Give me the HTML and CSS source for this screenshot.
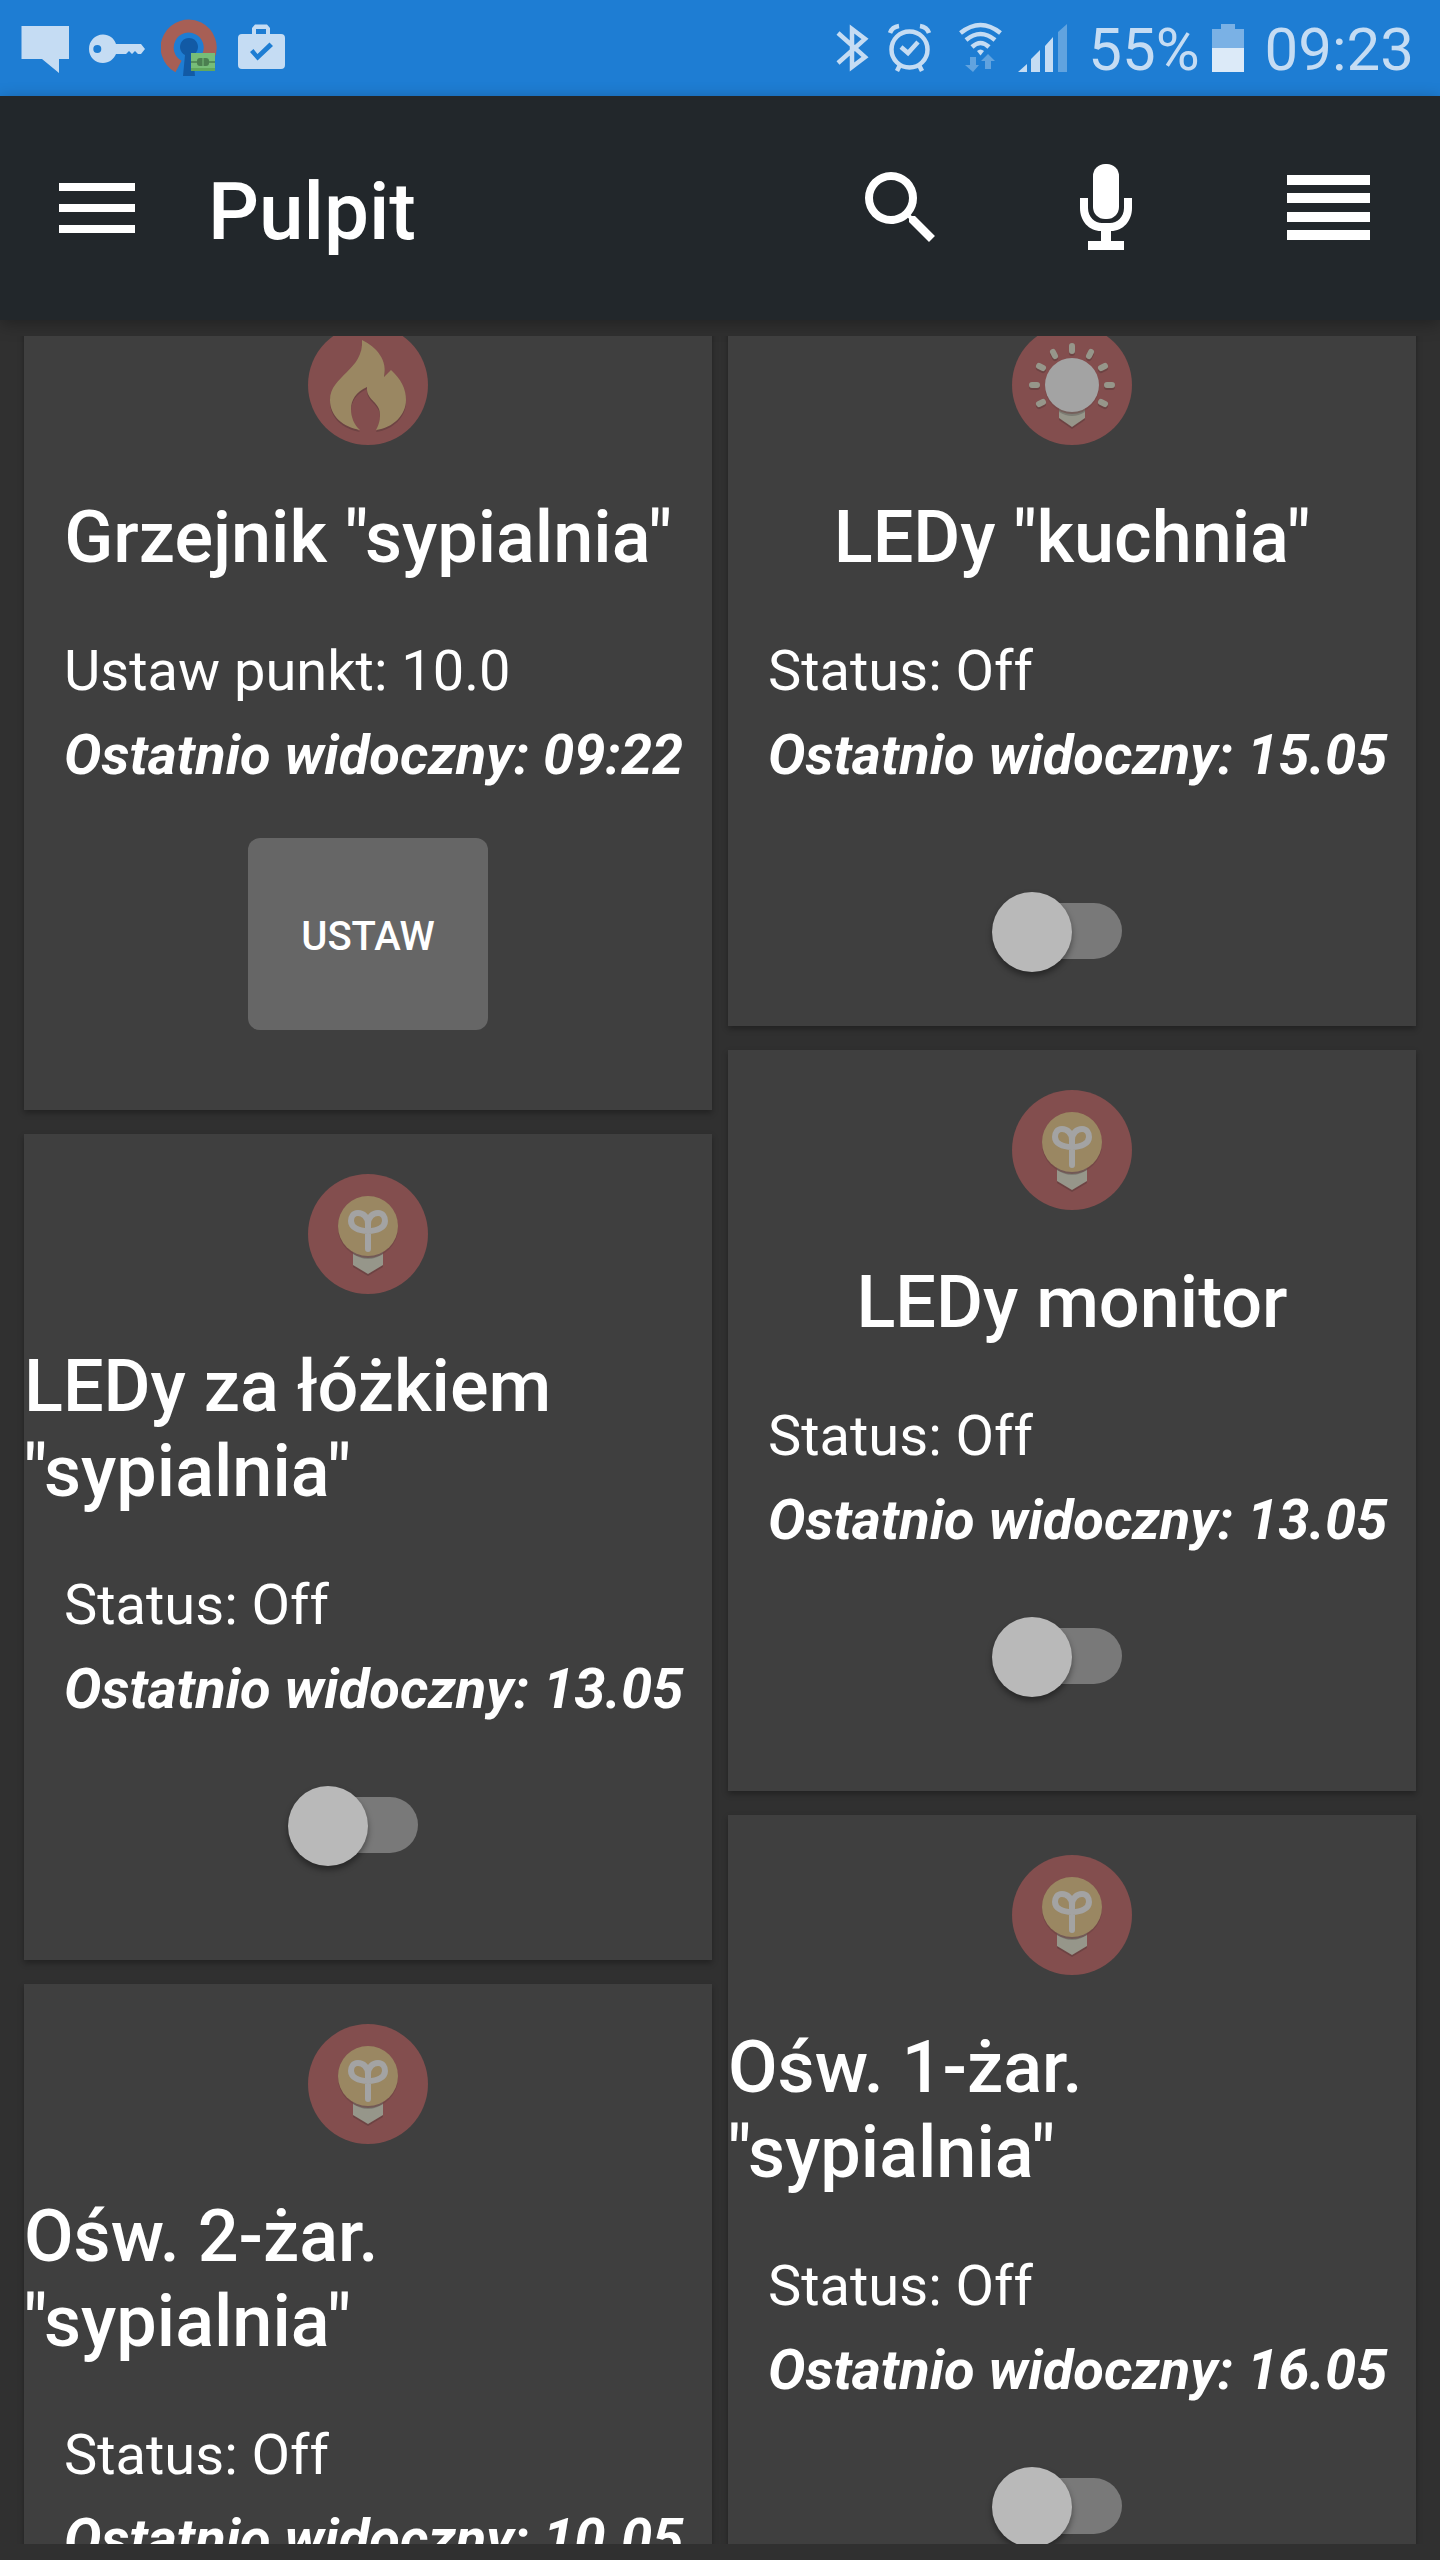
FILE: index.html
```html
<!DOCTYPE html>
<html lang="pl">
    <head>
        <title>Pulpit</title>
        <meta charset="UTF-8">
        <meta name="viewport" content="width=device-width, initial-scale=1">
        <link rel="stylesheet" href="styles.css">
    </head>
    <body>

        <!-- shared card icons -->
        <svg class="defs" aria-hidden="true">
            <symbol id="bulb" viewBox="0 0 120 120">
                <circle cx="60" cy="60" r="60" fill="#834e4e"/>
                <path d="M45 76V93L60 102L75 93V76Z" fill="#6d4343"/>
                <path d="M45 74V91L60 100L75 91V74Z" fill="#96968a"/>
                <path d="M45 76V80Q60 90 75 80V76Z" fill="#7c7c73"/>
                <circle cx="60" cy="54" r="30" fill="#6d4343" opacity=".6"/>
                <circle cx="60" cy="52" r="30" fill="#9a8762"/>
                <path d="M60 75V50C60 43 55 39 50 39C45 39 43 43 43 47C43 53 50 57 60 57C70 57 77 53 77 47C77 43 75 39 70 39C65 39 60 43 60 50" fill="none" stroke="#a3a3a3" stroke-width="6" stroke-linecap="round"/>
            </symbol>
        </svg>

        <div class="statusbar">
            <div class="notifications">
                <svg width="52" height="96" viewBox="21 0 52 96"><path d="M21.500 26H69V59H59V73L42 59H21.500Z"/></svg>
                <svg width="56" height="96" viewBox="89 0 56 96"><path fill-rule="evenodd" d="M103 34.500C109 34.500 114 38 116 44H141L145 49L141 54H138L135 51L132 54L129 51L126 54H116C114 59 109 63 103 63C95 63 89 57 89 49C89 41 95 34.500 103 34.500ZM97.300 45A4 4 0 1 0 97.300 53A4 4 0 1 0 97.300 45Z"/></svg>
                <svg width="60" height="96" viewBox="161 0 60 96">
                    <path d="M178.500 66.500A21.500 21.500 0 1 1 208 57" fill="none" stroke="#a75f55" stroke-width="13"/>
                    <path d="M185 55A9 9 0 1 1 193 55L195 76H183Z" fill="#125aa5"/>
                    <rect x="191" y="53" width="24" height="18" fill="#76bd78"/>
                    <rect x="191" y="68" width="24" height="3" fill="#62a85c"/>
                    <path d="M191 62H215" stroke="#4b7f50" stroke-width="1.500"/>
                    <rect x="197" y="58" width="12" height="8" rx="3" fill="#4b7f50"/>
                    <path d="M203 58V66" stroke="#76bd78"/>
                </svg>
                <svg width="48" height="96" viewBox="237 0 48 96"><path fill-rule="evenodd" d="M252 34V28L255 24.500H267L270 28V34H281Q285 34 285 38V65Q285 69 281 69H242Q238 69 238 65V38Q238 34 242 34ZM256 34H266V29H256ZM250 52L257.500 60.500L273 46L269.500 42.500L257.500 54L253.500 49Z"/></svg>
            </div>
            <div class="system">
                <svg width="41" height="96" viewBox="836 0 41 96"><path d="M832 33L859 57L846 67V29L859 39L832 63" transform="translate(7 0)" fill="none" stroke="#c5dcf3" stroke-width="4.500"/></svg>
                <svg width="59" height="96" viewBox="889 0 59 96">
                    <g fill="none" stroke="#c5dcf3" stroke-width="4.500">
                        <circle cx="910.500" cy="49.500" r="18"/>
                        <path d="M902 47L909 53L919 42"/>
                        <path d="M891 33Q893 27 900 26M930 33Q928 27 921 26M901 65L898 71M920 65L923 71"/>
                    </g>
                </svg>
                <svg width="47" height="96" viewBox="960 0 47 96">
                    <g fill="none" stroke="#c5dcf3" stroke-width="4.500">
                        <path d="M961.500 33Q981.500 17 1001.500 33"/>
                        <path d="M967 40Q981.500 28 996 40"/>
                        <path d="M973 47Q981.500 39 990 47"/>
                    </g>
                    <path d="M978 51Q981.500 48 985 51L981.500 55.500Z"/>
                    <path d="M971 57H977V65H980L974 72L966 65H971ZM986 69V61H982L989 54L996 61H992V69Z" opacity=".4"/>
                </svg>
                <svg width="58" height="96" viewBox="1019 0 58 96">
                    <path d="M1019 72L1028 64V72ZM1032 72V59L1041 50V72ZM1046 72V46L1054 37V72Z"/>
                    <path d="M1059 72V32L1068 24V72Z" opacity=".4"/>
                </svg>
                <span>55%</span>
                <svg width="41" height="96" viewBox="1212 0 41 96">
                    <path d="M1212 48V29H1221V24H1235V29H1244V48Z" fill="#7ab1e5"/>
                    <path d="M1212 48H1244V72H1212Z" fill="#dceaf8"/>
                </svg>
                <span>09:23</span>
            </div>
        </div>

        <header class="toolbar">
            <button class="menu" aria-label="Menu">
                <svg width="76" height="50" viewBox="0 0 76 50"><path d="M0 0H76V8H0ZM0 21H76V29H0ZM0 42H76V50H0Z"/></svg>
            </button>
            <h1>Pulpit</h1>
            <button class="action" aria-label="Szukaj">
                <svg width="96" height="96" viewBox="0 0 24 24"><path d="M15.500 14h-.79l-.28-.27A6.471 6.471 0 0 0 16 9.500 6.500 6.500 0 1 0 9.500 16c1.610 0 3.090-.59 4.230-1.570l.27.280v.79l5 4.990L20.490 19l-4.990-5zm-6 0C7.010 14 5 11.990 5 9.500S7.010 5 9.500 5 14 7.010 14 9.500 11.990 14 9.500 14z"/></svg>
            </button>
            <button class="action" aria-label="Mikrofon">
                <svg width="96" height="96" viewBox="1061 160 96 96">
                    <rect x="1093" y="164" width="26" height="55" rx="12"/>
                    <path d="M1080 198H1088V208C1088 217 1095 223 1102 223H1110C1117 223 1124 217 1124 208V198H1132V208C1132 221 1123 231 1111 231V241H1124V250H1088V241H1101V231C1089 231 1080 221 1080 208Z"/>
                </svg>
            </button>
            <button class="action" aria-label="Lista">
                <svg width="112" height="96" viewBox="1269 160 112 96"><path d="M1287 175H1370V185H1287ZM1287 193H1370V203H1287ZM1287 212H1370V222H1287ZM1287 230H1370V240H1287Z"/></svg>
            </button>
        </header>

        <main class="scroller">
            <div class="columns">
                <div class="column">
                    <section class="card">
                        <svg class="icon" viewBox="0 0 120 120">
                            <circle cx="60" cy="60" r="60" fill="#834e4e"/>
                            <path transform="translate(0 2)" fill="#6d4343" d="M54 15C69 22 80 36 76 52L83 45C93 54 98 64 98 75C98 90 85 103 68 105C72 98 73 90 71 84C68 76 58 73 59 62C48 67 43 75 43 84C43 92 46 100 52 105C35 102 22 91 22 75C22 51 56 45 54 15Z"/>
                            <path fill="#9a8762" d="M54 15C69 22 80 36 76 52L83 45C93 54 98 64 98 75C98 90 85 103 68 105C72 98 73 90 71 84C68 76 58 73 59 62C48 67 43 75 43 84C43 92 46 100 52 105C35 102 22 91 22 75C22 51 56 45 54 15Z"/>
                        </svg>
                        <h2>Grzejnik "sypialnia"</h2>
                        <div class="info">
                            <p>Ustaw punkt: 10.0</p>
                            <p class="seen">Ostatnio widoczny: 09:22</p>
                        </div>
                        <button class="set">USTAW</button>
                    </section>
                    <section class="card">
                        <svg class="icon"><use href="#bulb"/></svg>
                        <h2 id="bed">LEDy za łóżkiem "sypialnia"</h2>
                        <div class="info">
                            <p>Status: Off</p>
                            <p class="seen">Ostatnio widoczny: 13.05</p>
                        </div>
                        <input type="checkbox" class="switch" aria-labelledby="bed">
                    </section>
                    <section class="card">
                        <svg class="icon"><use href="#bulb"/></svg>
                        <h2 id="light2">Ośw. 2-żar. "sypialnia"</h2>
                        <div class="info">
                            <p>Status: Off</p>
                            <p class="seen">Ostatnio widoczny: 10.05</p>
                        </div>
                        <input type="checkbox" class="switch" aria-labelledby="light2">
                    </section>
                </div>

                <div class="column">
                    <section class="card dimmer">
                        <svg class="icon" viewBox="0 0 120 120">
                            <circle cx="60" cy="60" r="60" fill="#834e4e"/>
                            <path d="M47 80V95L60 104L73 95V80Z" fill="#6d4343"/>
                            <path d="M47 80V93L60 102L73 93V80Z" fill="#96968a"/>
                            <path d="M47 82V87Q60 95 73 87V82Z" fill="#7c7c73"/>
                            <g fill="none" stroke-width="6" stroke-linecap="round">
                                <path stroke="#6d4343" transform="translate(0 2)" d="M60 26V21M77 31L79 27M89 43L93 41M95 60H100M89 77L93 79M43 31L41 27M31 43L27 41M25 60H20M31 77L27 79"/>
                                <path stroke="#96968a" d="M60 26V21M77 31L79 27M89 43L93 41M95 60H100M89 77L93 79M43 31L41 27M31 43L27 41M25 60H20M31 77L27 79"/>
                            </g>
                            <circle cx="60" cy="62" r="27" fill="#6d4343" opacity=".5"/>
                            <circle cx="60" cy="60" r="27" fill="#a3a3a3"/>
                        </svg>
                        <h2 id="kitchen">LEDy "kuchnia"</h2>
                        <div class="info">
                            <p>Status: Off</p>
                            <p class="seen">Ostatnio widoczny: 15.05</p>
                        </div>
                        <input type="checkbox" class="switch" aria-labelledby="kitchen">
                    </section>
                    <section class="card">
                        <svg class="icon"><use href="#bulb"/></svg>
                        <h2 id="monitor">LEDy monitor</h2>
                        <div class="info">
                            <p>Status: Off</p>
                            <p class="seen">Ostatnio widoczny: 13.05</p>
                        </div>
                        <input type="checkbox" class="switch" aria-labelledby="monitor">
                    </section>
                    <section class="card">
                        <svg class="icon"><use href="#bulb"/></svg>
                        <h2 id="light1">Ośw. 1-żar. "sypialnia"</h2>
                        <div class="info">
                            <p>Status: Off</p>
                            <p class="seen">Ostatnio widoczny: 16.05</p>
                        </div>
                        <input type="checkbox" class="switch" aria-labelledby="light1">
                    </section>
                </div>
            </div>
        </main>

    </body>
</html>
```

FILE: styles.css
```css
* {
    box-sizing: border-box;
}
body {
    display: flex;
    flex-direction: column;
    height: 100vh;
    margin: 0;
    overflow: hidden;
    background: #303030;
    color: #fff;
    font-family: Roboto, sans-serif;
}
h1, h2, p {
    margin: 0;
}
h1, h2 {
    font-weight: 500;
}
button {
    padding: 0;
    border: 0;
    background: none;
    color: inherit;
    font-family: inherit;
}
svg {
    display: block;
    flex: none;
}
.defs {
    position: absolute;
    width: 0;
    height: 0;
}

/* system bar */
.statusbar {
    display: flex;
    justify-content: space-between;
    flex: none;
    height: 96px;
    padding: 0 26px 0 21px;
    background: #1e7dd3;
    color: #c5dcf3;
    fill: #c5dcf3;
    font-size: 60px;
    line-height: 100px;
}
.notifications {
    display: flex;
    gap: 16px;
}
.system {
    display: flex;
    gap: 12px;
}

/* app bar */
.toolbar {
    display: flex;
    align-items: center;
    flex: none;
    height: 224px;
    padding: 0 59px;
    background: #22272b;
    fill: #fff;
    box-shadow: 0 4px 16px rgba(0, 0, 0, 0.3);
}
.toolbar h1 {
    flex: 1;
    padding: 8px 0 0 73px;
    font-size: 80px;
}
.action {
    width: 112px;
    margin-left: 96px;
}

/* card list, scrolled down a little */
.scroller {
    flex: 1;
    min-height: 0;
    margin: 16px 0;
    overflow: hidden;
}
.columns {
    display: grid;
    grid-template-columns: 1fr 1fr;
    gap: 16px;
    margin-top: -51px;
    padding: 0 24px;
}
.column {
    display: flex;
    flex-direction: column;
    gap: 24px;
    min-width: 0;
}
.card {
    display: flex;
    flex-direction: column;
    align-items: center;
    padding: 40px 0 94px;
    background: #3f3f3f;
    box-shadow: 0 3px 6px rgba(0, 0, 0, 0.3);
}
.icon {
    width: 120px;
    height: 120px;
}
.card h2 {
    margin: 50px 0 49px;
    font-size: 72px;
    line-height: 85px;
}
.info {
    align-self: stretch;
    padding-left: 40px;
    font-size: 56px;
    line-height: 84px;
    white-space: nowrap;
}
.seen {
    font-style: italic;
    font-weight: 700;
}
.set {
    width: 240px;
    height: 192px;
    margin: 41px 0 -14px;
    padding-top: 4px;
    border-radius: 12px;
    background: #666;
    font-size: 40px;
    font-weight: 500;
}
.switch {
    appearance: none;
    position: relative;
    width: 160px;
    height: 80px;
    margin: 55px 0 0;
}
.switch::before {
    content: "";
    position: absolute;
    top: 11px;
    left: 8px;
    width: 122px;
    height: 56px;
    border-radius: 28px;
    background: #797979;
}
.switch::after {
    content: "";
    position: absolute;
    top: 0;
    left: 0;
    width: 80px;
    height: 80px;
    border-radius: 50%;
    background: #b9b9b9;
    box-shadow: 0 4px 6px rgba(0, 0, 0, 0.4);
}
.switch:checked::after {
    left: 50px;
}
.dimmer {
    padding-bottom: 54px;
}
.dimmer .switch {
    margin-top: 95px;
}
```
